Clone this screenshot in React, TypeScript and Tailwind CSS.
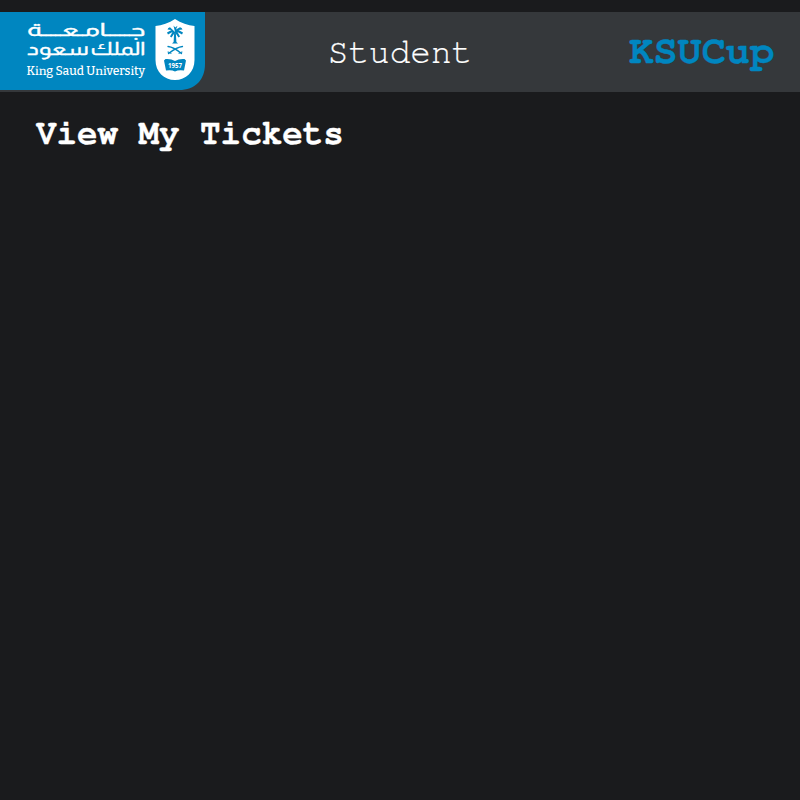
function UniversityLogo() {
  return (
    <svg className="block h-20 w-[206px]" viewBox="0 0 206 80" role="img" aria-label="King Saud University">
      <path d="M0 0H205V52C205 68 195 78 179 78H0Z" fill="#0086c0" />
      <g fill="#fff" stroke="#fff" strokeWidth="0.35" fontFamily="Almarai, Cairo, 'DejaVu Sans', sans-serif" direction="rtl">
        <text x="145.500" y="23.500" fontSize="18" textLength="118.500" lengthAdjust="spacingAndGlyphs">جـــــامـعــــة</text>
        <text x="145.500" y="43.200" fontSize="18" wordSpacing="-2" textLength="118.500" lengthAdjust="spacingAndGlyphs">الملك سعود</text>
      </g>
      <text x="26.500" y="62.500" fill="#fff" fontFamily="Bitter, 'DejaVu Serif', serif" fontWeight="500" fontSize="12" textLength="118.500" lengthAdjust="spacingAndGlyphs">
        King Saud University
      </text>
      <path d="M175 7C181 11 188 13.500 194.500 14V48C194.500 60 186 68 175 68S155.500 60 155.500 48V14C162 13.500 169 11 175 7Z" fill="#fff" />
      <g fill="#0086c0">
        <path d="M174.200 20H175.800L176.400 30L178 31.500H172L173.600 30Z" />
        <path d="M175 20L173.500 13.500L175.200 15.500L177.500 13.800L176 17.500L180 15.200Q182 15.500 182.500 17.500L178.500 18L183 20.500L182 22.500L177.500 20L180 24.500L178.500 25.500L175 20.500L171.500 25.500L170 24.500L172.500 20L168 22.500L167 20.500L171.500 18L167.500 17.500Q168 15.500 170 15.200Z" />
      </g>
      <g fill="none" stroke="#0086c0" strokeLinecap="round" strokeWidth="1.300">
        <path d="M168 34.500Q173.500 35 181.500 41.500" />
        <path d="M182.500 34.500Q177 35 168.500 41.500" />
        <path d="M168 40L171 41.300M182 40L179 41.300" strokeWidth="1.100" />
      </g>
      <path d="M165.500 47Q171 46.500 175 49Q179 46.500 184.500 47L186 48.500L184 58.500Q178.500 57.500 175 59.500Q171.500 57.500 166 58.500L164 48.500Z" fill="#0086c0" />
      <text x="168" y="56" fill="#fff" fontFamily="'Open Sans', 'DejaVu Sans', sans-serif" fontWeight="700" fontSize="6.5" textLength="14" lengthAdjust="spacingAndGlyphs">1957</text>
    </svg>
  );
}

export default function App() {
  return (
    <div className="min-h-screen bg-[#1a1b1d] pt-3 font-[FreeMono,'Courier_Prime','Liberation_Mono',monospace]">
      <header className="grid h-20 grid-cols-[206px_1fr_206px] items-center bg-[#35383b]">
        <UniversityLogo />
        <span className="pt-0.5 text-center text-[34.4px] leading-none text-white [-webkit-text-stroke:0.2px_white]">Student</span>
        <span className="pr-[26px] pb-0.5 text-right text-[40.2px] leading-none font-bold text-[#0086c0] [-webkit-text-stroke:0.4px_#0086c0]">KSUCup</span>
      </header>
      <main className="px-9 pt-[22px]">
        <h1 className="text-[34.2px] leading-10 font-bold text-white [-webkit-text-stroke:0.3px_white]">View My Tickets</h1>
      </main>
    </div>
  );
}
